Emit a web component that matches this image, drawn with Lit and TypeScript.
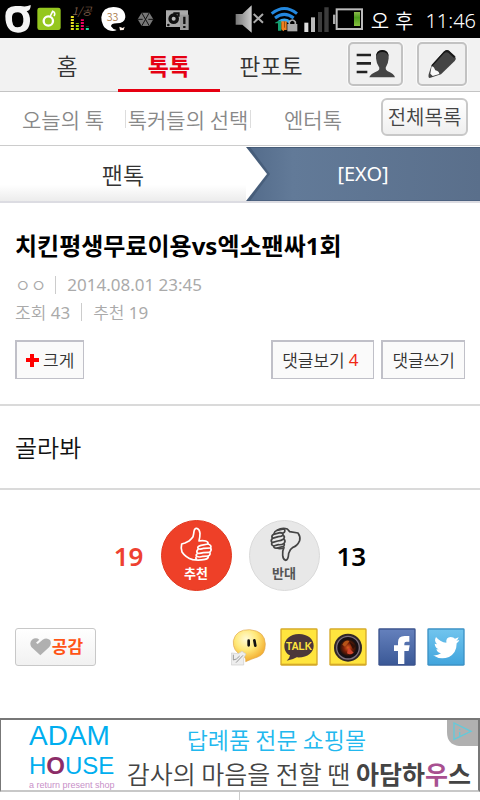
import { LitElement, html, css, svg } from "lit";
import { customElement } from "lit/decorators.js";

const statusLeft = html`
  <svg class="st" width="194" height="38" viewBox="0 0 582 114" aria-hidden="true">
    <path d="M16 48Q17 18 46 18H62Q78 22 92 15Q93 31 80 34Q91 43 90 64Q88 98 54 98Q16 97 16 48ZM36 50Q34 82 53 82Q72 81 70 56Q69 38 54 37Q37 37 36 50Z" fill="#f4f4f4" fill-rule="evenodd"/>
    <rect x="112" y="23" width="70" height="67" rx="7" fill="#95c71f"/>
    <circle cx="145" cy="63" r="14" fill="none" stroke="#fff" stroke-width="7"/>
    <path d="M151 48L158 34Q168 38 162 48" fill="none" stroke="#fff" stroke-width="5"/>
    <text x="216" y="46" font-size="32" font-style="italic" fill="#80604c">1/공</text>
    <g stroke-width="9" stroke-dasharray="6 3" fill="none">
      <path d="M217 90V46" stroke="#e8e020"/><path d="M232 90V70" stroke="#a8e000"/>
      <path d="M247 90V58" stroke="#f00060"/><path d="M262 90V80" stroke="#20e0a0"/>
    </g>
    <path d="M304 52Q308 21 340 21Q376 22 376 52Q374 70 350 70Q333 70 333 79Q338 88 350 90Q340 96 324 90Q310 82 308 72Q304 66 304 52Z" fill="#fff"/>
    <path d="M358 80L368 84L374 80L371 90L360 91Z" fill="#fff2e8"/>
    <text x="320" y="62" font-size="32" fill="#a87848">33</text>
    <path d="M425 38H448L460 58L448 78H425L413 58Z" fill="#777"/>
    <path d="M425 38L448 78M448 38L425 78M413 58H428M445 58H460" stroke="#111" stroke-width="3"/>
    <path d="M498 31H564V45H540V81H498Z" fill="#aaa"/>
    <circle cx="521" cy="56" r="16" fill="#111"/><circle cx="521" cy="56" r="6" fill="#bbb"/>
    <path d="M520 40H536V50" fill="none" stroke="#111" stroke-width="6"/>
    <path d="M540 44H566V90H540Z" fill="#999"/><path d="M553 50V72M553 78V84" stroke="#111" stroke-width="7"/>
    <circle cx="505" cy="75" r="4" fill="#111"/>
  </svg>`;

const statusRight = html`
  <svg class="st" width="136" height="38" viewBox="0 0 408 114" aria-hidden="true">
    <defs>
      <linearGradient id="spk"><stop offset="0" stop-color="#777"/><stop offset="1" stop-color="#ccc"/></linearGradient>
      <linearGradient id="bat" x2="0" y2="1"><stop offset="0" stop-color="#8cb84c"/><stop offset=".4" stop-color="#4c9c1c"/><stop offset="1" stop-color="#88c040"/></linearGradient>
    </defs>
    <path d="M2 42H22L50 16V98L22 74H2Z" fill="url(#spk)"/>
    <path d="M56 42L84 68M84 42L56 68" stroke="#aaa" stroke-width="6"/>
    <g fill="none" stroke="#2388df" stroke-width="9">
      <path d="M110 41Q148 10 186 41"/><path d="M120 54Q148 32 176 54"/><path d="M132 66Q148 54 164 66" stroke="#35a6ef"/>
    </g>
    <path d="M120 68L131 62H139V92H129V70H120Z" fill="#15a070"/>
    <path d="M139 64H148V83H154L145 94L139 88ZM149 64H155V90H149Z" fill="#f08020"/>
    <rect x="157" y="72" width="30" height="22" fill="#aaa"/><path d="M163 73V66Q172 54 181 66V73" fill="none" stroke="#aaa" stroke-width="5"/>
    <path d="M208 68H220V96H208Z" fill="#ddd"/><path d="M228 52H240V96H228Z" fill="#bbb"/>
    <path d="M249 36H261V96H249ZM268 22H281V96H268Z" fill="#3c3c3c"/>
    <rect x="305" y="28" width="76" height="59" fill="none" stroke="#bbb" stroke-width="6"/>
    <rect x="294" y="44" width="7" height="28" fill="#aaa"/><rect x="357" y="36" width="18" height="42" fill="url(#bat)"/>
  </svg>`;

const person = html`
  <svg width="40" height="30" viewBox="0 0 120 90" aria-hidden="true">
    <path d="M2 18H45M2 43H45M2 69H34" stroke="#222" stroke-width="8"/>
    <path d="M40 85Q42 75 66 65Q71 62 70 56Q61 44 60 28Q59 4 79 3Q99 4 98 28Q97 45 89 56Q88 62 94 66Q115 75 117 85Z" fill="#444"/>
    <path d="M60 24Q60 3 79 3Q98 3 98 24Q95 9 79 9Q64 9 60 24Z" fill="#111"/>
  </svg>`;

const pencil = html`
  <svg width="30" height="30" viewBox="0 0 90 90" aria-hidden="true">
    <path d="M14 48L50 8Q58 0 66 5L84 22Q89 29 83 36L42 76L8 87Q3 87 5 76Z" fill="#444"/>
    <path d="M14 50L10 74L17 81L37 75Q36 66 25 64Q22 54 14 50Z" fill="#fafafa"/>
    <path d="M50 8Q58 0 66 5L84 22L82 28L64 11Q58 7 50 14L14 54V48Z" fill="#181818"/>
  </svg>`;

const thumbUp = svg`
  <path d="M62 72L72 69L84 63Q92 56 96 50Q98 43 99 34Q101 24 107 25Q116 28 117 40Q117 52 114 63Q124 61 134 63Q143 66 141 72Q153 76 149 84Q153 91 146 97Q150 103 142 108Q143 116 132 118Q114 122 95 119Q74 113 63 96Q59 84 62 72Z"/>
  <path d="M141 72L120 76Q108 79 111 85Q116 90 128 85L149 84M111 88Q105 94 109 99Q114 102 127 98L146 97M109 101Q103 105 107 109Q114 113 126 109L142 108M106 111Q102 115 108 118"/>`;
const thumbDown = svg`
  <path d="M84 31Q99 22 115 27L122 35L147 39Q155 50 152 62Q145 78 132 82Q122 88 119 100Q118 119 110 121Q102 118 101 106Q99 94 105 83Q93 88 84 84Q74 86 74 78Q65 75 69 68Q64 62 70 55Q66 47 74 43Q76 34 84 31Z"/>
  <path d="M74 43L93 38Q103 38 102 45Q98 50 88 50L70 55M102 45Q109 50 104 57Q97 62 86 63L69 68M105 57Q111 63 105 70Q98 75 88 74L74 78M105 70Q108 75 104 79L84 84M84 31L104 27Q110 30 106 37L101 40"/>`;

const talkIcon = html`
  <svg width="38" height="38" viewBox="0 0 114 114" aria-hidden="true">
    <rect x="1" y="1" width="112" height="112" rx="4" fill="#d5a927"/><rect x="5" y="5" width="104" height="102" fill="#ffe53e"/>
    <path d="M57 18C29 18 13 36 13 53C13 68 20 77 30 82Q29 92 20 98Q38 96 50 88C82 90 101 74 101 53C101 33 83 18 57 18Z" fill="#4b373a"/>
    <text x="57" y="67" text-anchor="middle" font-size="30" font-weight="900" font-family="Liberation Sans, sans-serif" fill="#ffe53e">TALK</text>
  </svg>`;
const cameraIcon = html`
  <svg width="38" height="38" viewBox="0 0 114 114" aria-hidden="true">
    <defs><radialGradient id="lens"><stop offset="0" stop-color="#e06020"/><stop offset=".5" stop-color="#802008"/><stop offset="1" stop-color="#20100a"/></radialGradient></defs>
    <rect x="1" y="1" width="112" height="112" rx="4" fill="#d5a927"/><rect x="5" y="5" width="104" height="102" fill="#ffe53e"/>
    <circle cx="57" cy="59" r="42" fill="#312728"/><circle cx="57" cy="59" r="34" fill="#160f14" stroke="#7c707e" stroke-width="4"/>
    <circle cx="57" cy="59" r="25" fill="url(#lens)"/>
    <path d="M40 50Q48 34 62 39L48 56Z" fill="#b65418"/><path d="M58 58L74 74Q64 82 54 76Z" fill="#d2452c"/><path d="M60 40L80 54L72 64Z" fill="#301008"/>
  </svg>`;
const facebookIcon = html`
  <svg width="38" height="38" viewBox="0 0 114 114" aria-hidden="true">
    <defs><linearGradient id="fb" x2="0" y2="1"><stop offset="0" stop-color="#6480bc"/><stop offset="1" stop-color="#3b5997"/></linearGradient></defs>
    <rect x="1" y="1" width="112" height="112" rx="4" fill="#3a528c"/><rect x="5" y="5" width="104" height="104" fill="url(#fb)"/>
    <path d="M60 108V69H48V52H60V43Q60 24 80 24H94V41H85Q79 41 79 47V52H95L92 69H79V108Z" fill="#fff"/>
  </svg>`;
const twitterIcon = html`
  <svg width="38" height="38" viewBox="0 0 114 114" aria-hidden="true">
    <defs><linearGradient id="tw" x2="0" y2="1"><stop offset="0" stop-color="#70c4ee"/><stop offset="1" stop-color="#42a5dd"/></linearGradient></defs>
    <rect x="1" y="1" width="112" height="112" rx="4" fill="#3a90c4"/><rect x="5" y="5" width="104" height="104" fill="url(#tw)"/>
    <path d="M18 82Q33 83 42 76Q31 74 28 64H35Q24 59 23 47L30 49Q20 39 27 27Q40 43 58 44Q56 28 71 27Q80 27 84 32L95 28Q93 35 88 38L97 36Q95 42 89 46Q89 75 66 87Q40 97 18 82Z" fill="#fff"/>
  </svg>`;
const smileIcon = html`
  <svg width="38" height="38" viewBox="0 0 114 114" aria-hidden="true">
    <defs><radialGradient id="smile" cx=".4" cy=".3" r=".75"><stop offset="0" stop-color="#fffbd8"/><stop offset=".45" stop-color="#ffe878"/><stop offset="1" stop-color="#f0a020"/></radialGradient></defs>
    <path d="M7 38Q15 4 56 5Q102 9 103 48Q103 80 80 87Q62 93 44 101Q46 88 35 84Q4 70 7 38Z" fill="url(#smile)" stroke="#e0a850" stroke-width="2"/>
    <path d="M53 38V52M70 37L73 53" stroke="#111" stroke-width="8" stroke-linecap="round"/>
    <path d="M1 75L21 77L33 70L45 78L38 91V111H1Z" fill="#eee" stroke="#ccc" stroke-width="2"/>
    <path d="M7 80V96Q16 96 26 84M15 104L36 82" fill="none" stroke="#999" stroke-width="3"/>
  </svg>`;

@customElement("app-root")
export class AppRoot extends LitElement {
  static styles = css`
    :host { display: block; min-height: 100vh; background: #fff; color: #333; font-family: "Noto Sans", "Noto Sans CJK KR", sans-serif; font-size: 17px; line-height: 28px; overflow: hidden; }
    * { box-sizing: border-box; }
    a { color: inherit; text-decoration: none; }
    button { font: inherit; color: inherit; padding: 0; margin: 0; cursor: pointer; }
    svg { display: block; flex: none; }
    p, h1 { margin: 0; }
    .ko { font-family: "Noto Sans CJK KR", sans-serif; font-weight: 350; }
    .status { height: 38px; background: #000; color: #fff; display: flex; justify-content: space-between; }
    .status-end { display: flex; align-items: center; padding-right: 4px; font-size: 20px; }
    .status-end .clock { display: flex; gap: 6px; padding-top: 4px; }
    .clock time { padding-left: 6px; font-family: "Noto Sans", sans-serif; }
    .nav { height: 54px; background: #f2f2f2; border-bottom: 1px solid #c4c4c4; display: flex; padding: 0 13px 0 16px; }
    .tabs { flex: 1; display: grid; grid-template-columns: repeat(3, 1fr); margin-right: 26px; font-size: 23px; }
    .tabs a { display: flex; align-items: center; justify-content: center; }
    .tabs .on { color: #e60012; font-weight: 700; border-bottom: 3px solid #e60012; margin-bottom: -1px; padding-top: 3px; }
    .tool { height: 44px; width: 55px; margin: 4px 0 0 14px; border: 2px solid #c2c2c2; border-radius: 5px; background: #f0f0f0; display: flex; align-items: center; justify-content: center; box-shadow: 0 0 0 1px #fafafa; }
    .tool:first-of-type { margin-left: 0; }
    .tool.narrow { width: 50px; }
    .sub { height: 54px; border-bottom: 1px solid #ccc; display: flex; align-items: center; padding-right: 12px; }
    .cats { flex: 1; display: grid; grid-template-columns: repeat(3, 1fr); color: #888; font-size: 21px; line-height: 18px; margin-right: 6px; }
    .cats a { text-align: center; white-space: nowrap; border-left: 1px solid #ddd; }
    .cats a:first-child { border-left-color: transparent; }
    .all { width: 87px; height: 38px; margin-bottom: 4px; border: 2px solid #c8c8c8; border-radius: 6px; background: linear-gradient(#fff, #efefef); color: #444; font-size: 20px; line-height: 32px; }
    .crumbs { display: grid; grid-template-columns: 41fr 39fr; height: 57px; border-bottom: 2px solid #dcdce2; padding-top: 1px; }
    .crumbs > * { display: flex; align-items: center; justify-content: center; }
    .board { font-size: 23px; background: linear-gradient(#fff 70%, #ececec); }
    .group { position: relative; color: #fff; font-size: 20px; background: linear-gradient(90deg, #536b8a, #627a98 20%, #5a6f8b); border-top: 1px solid #465c78; border-bottom: 1px solid #4c6280; }
    .arrow { position: absolute; left: 0; top: -1px; height: 54px; width: 28px; }
    .post { padding: 27px 15px 25px; border-bottom: 2px solid #dadada; }
    h1 { font-size: 24px; line-height: 32px; font-weight: 700; color: #000; }
    .meta { color: #aaa; font-size: 17px; line-height: 27px; display: flex; align-items: center; }
    .meta i { width: 1px; height: 18px; background: #ccc; margin: 0 11px; }
    .first { margin-top: 9px; }
    .first i { margin-left: 9px; }
    .row { display: flex; align-items: center; gap: 7px; }
    .actions { margin-top: 14px; }
    .push { margin-left: auto; }
    .box { height: 39px; padding: 0 9px; border: solid #c0c0c8; border-width: 2px 1px 1px 2px; background: #fafafa; display: flex; align-items: center; white-space: nowrap; }
    .box svg { margin-right: 4px; }
    .box b { color: #f02814; font-weight: 400; margin: 0 6px 0 4px; font-family: "Noto Sans", sans-serif; }
    .body { color: #111; font-size: 24px; line-height: 36px; padding: 23px 15px; border-bottom: 2px solid #dadada; }
    .votes { display: flex; align-items: center; justify-content: center; gap: 17px; padding-top: 30px; font-size: 26px; font-weight: 600; color: #000; }
    .votes .up { color: #ee4130; }
    .vote { position: relative; width: 71px; height: 71px; border: 1px solid #dadada; border-radius: 50%; background: #e8e8e8; color: #555; font-size: 13px; line-height: 16px; font-weight: 700; display: flex; flex-direction: column; justify-content: flex-end; padding-bottom: 9px; align-items: center; }
    .vote.yes { background: #ee4028; border-color: #e2381f; color: #fff; }
    .vote svg { position: absolute; left: -1px; top: -1px; fill: none; stroke: #444; stroke-width: 5; stroke-linejoin: round; }
    .vote.yes svg { stroke: #fff; }
    .share { padding: 37px 15px 52px; gap: 11px; }
    .like { width: 81px; height: 38px; border: 1px solid #c8c8c8; border-radius: 3px; background: linear-gradient(#fff, #f1f1f1); color: #ff5415; font-weight: 700; display: flex; align-items: center; justify-content: center; gap: 1px; margin-right: auto; padding-left: 2px; }
    .ad { position: relative; display: flex; justify-content: space-between; height: 74px; padding: 0 7px 0 28px; border: 1px solid #777; border-width: 2px 2px 2px 1px; border-bottom-color: #c8c8c8; white-space: nowrap; color: #444; }
    .brand { color: #00aeef; font: 28px/32px "Liberation Sans", sans-serif; display: flex; flex-direction: column; }
    .brand .second { font-size: 24px; line-height: 28px; }
    .brand b { color: #8c2c68; font-weight: 700; }
    .brand small { color: #c890c8; font-size: 9px; line-height: 10px; }
    .pitch { font-size: 25px; line-height: 30px; display: flex; flex-direction: column; }
    .pitch .lead { color: #22b8ee; font-size: 23px; padding-left: 60px; line-height: 38px; }
    .pitch strong { font-weight: 600; } .pitch em { color: #a85090; font-style: normal; }
    .mark { position: absolute; right: 0; top: 0; }
    .foot { height: 8px; width: 50%; border-right: 1px solid #ccc; }
  `;

  render() {
    return html`
      <div class="status ko">${statusLeft}
        <div class="status-end">${statusRight}<div class="clock"><span>오</span><span>후</span><time>11:46</time></div></div>
      </div>
      <header class="nav ko">
        <nav class="tabs"><a href="#home">홈</a><a class="on" href="#talk">톡톡</a><a href="#photo">판포토</a></nav>
        <button class="tool" aria-label="내 정보">${person}</button>
        <button class="tool narrow" aria-label="글쓰기">${pencil}</button>
      </header>
      <div class="sub ko">
        <nav class="cats"><a href="#today">오늘의 톡</a><a href="#picks">톡커들의 선택</a><a href="#enter">엔터톡</a></nav>
        <button class="all">전체목록</button>
      </div>
      <div class="crumbs">
        <a class="board ko" href="#fan">팬톡</a>
        <a class="group" href="#exo">
          <svg class="arrow" viewBox="0 0 28 54" aria-hidden="true"><path d="M0 0H4L24 27L4 54H0Z" fill="#2c4058" opacity=".35"/><path d="M0 0L21 27L0 54Z" fill="#fff"/></svg>
          [EXO]
        </a>
      </div>
      <main>
        <article class="post">
          <h1>치킨평생무료이용vs엑소팬싸1회</h1>
          <div class="meta first"><span class="ko">ㅇㅇ</span><i></i><time>2014.08.01 23:45</time></div>
          <div class="meta"><span><span class="ko">조회</span> 43</span><i></i><span><span class="ko">추천</span> 19</span></div>
          <div class="row actions ko">
            <button class="box"><svg width="13" height="13" viewBox="0 0 13 13" aria-hidden="true"><path d="M6 0V13M0 6H13" stroke="#f00" stroke-width="4"/></svg>크게</button>
            <a class="box push" href="#comments">댓글보기<b>4</b></a>
            <a class="box" href="#write">댓글쓰기</a>
          </div>
        </article>
        <p class="body ko">골라봐</p>
        <div class="votes">
          <span class="up">19</span>
          <button class="vote yes"><svg width="71" height="71" viewBox="0 0 213 213" aria-hidden="true">${thumbUp}</svg>추천</button>
          <button class="vote"><svg width="71" height="71" viewBox="0 0 213 213" aria-hidden="true">${thumbDown}</svg>반대</button>
          <span>13</span>
        </div>
        <div class="row share">
          <button class="like"><svg width="21" height="18" viewBox="0 0 63 54" aria-hidden="true"><path d="M31 52L4 27Q-3 14 6 5Q18-3 28 5L18 14L23 18L38 5Q50-3 60 6Q66 16 58 27Z" fill="#b0b0b0"/></svg>공감</button>
          <a href="#smile" aria-label="쪽지">${smileIcon}</a><a href="#kakaotalk" aria-label="카카오톡">${talkIcon}</a><a href="#kakaostory" aria-label="카카오스토리">${cameraIcon}</a><a href="#facebook" aria-label="페이스북">${facebookIcon}</a><a href="#twitter" aria-label="트위터">${twitterIcon}</a>
        </div>
      </main>
      <a class="ad ko" href="#ad">
        <span class="brand"><span>ADAM</span><span class="second">H<b>O</b>USE</span><small>a return present shop</small></span>
        <span class="pitch"><span class="lead">답례품 전문 쇼핑몰</span><span>감사의 마음을 전할 땐 <strong>아담하<em>우</em>스</strong></span></span>
        <svg class="mark" width="31" height="26" viewBox="0 0 93 78" aria-hidden="true"><path d="M0 0H93V78H36Q0 74 0 36Z" fill="#b0b0b0"/><path d="M21 9V58L72 34ZM38 27V31M38 36V47" fill="none" stroke="#62cadb" stroke-width="4"/></svg>
      </a>
      <div class="foot"></div>
    `;
  }
}
